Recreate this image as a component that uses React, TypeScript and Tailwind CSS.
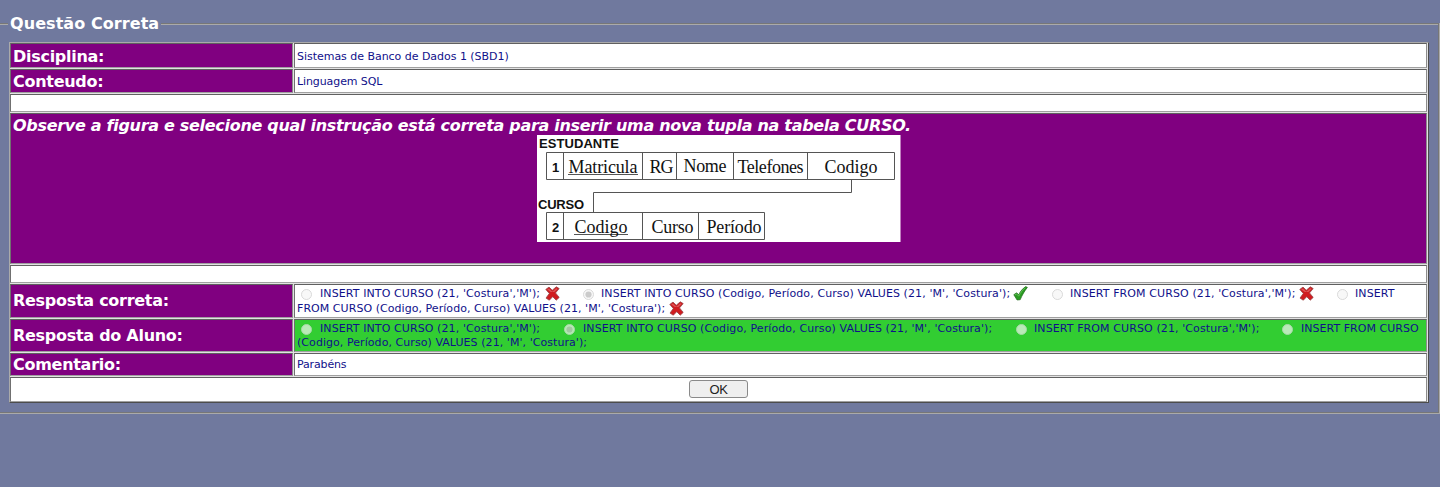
import type { ReactNode } from 'react';

const verdana = "font-['DejaVu_Sans',sans-serif]";

function Cross() {
  return (
    <svg width="15" height="15" viewBox="0 0 15 15" className="shrink-0">
      <path d="M.8 3.4 4 1.1 7.3 4.2 11.3 .8 14.2 2.6 10.5 6.9 14.2 11.4 11.2 14.2 7.7 10.7 4.3 14.2 1 12.1 4.3 7.5Z" fill="#d01c20" stroke="#96484a" strokeWidth=".8" strokeLinejoin="round" />
      <path d="M2.2 3.5 3.9 2.4 7.3 5.7 11.4 2.3 12.5 2.9 9.4 6 5.8 6Z" fill="#dd5658" />
    </svg>
  );
}

function Check() {
  return (
    <svg width="15" height="15" viewBox="0 0 15 15" className="shrink-0">
      <path d="M.8 8.7 3.7 6.8 5.7 8.8C7.4 5.2 9.8 2.4 12.7 .6L14.4 1.4C11.6 4.7 9.2 9 7.2 13.7L4.1 14Z" fill="#2a9c22" stroke="#246c20" strokeWidth=".7" strokeLinejoin="round" />
      <path d="M2 8.9 3.5 7.9 5.7 10.2C7.7 6.2 9.8 3.7 12.2 1.8" fill="none" stroke="#66c45a" strokeWidth=".9" />
    </svg>
  );
}

function Radio({ checked, green }: { checked?: boolean; green?: boolean }) {
  return (
    <svg width="11" height="11" viewBox="0 0 11 11" className="mt-[3px] shrink-0">
      <circle cx="5.5" cy="5.5" r="5" fill={green ? '#b9eab8' : '#f8f8f8'} stroke={green ? '#a5d8a4' : '#d9d9d9'} />
      {checked && <circle cx="5.5" cy="5.5" r="3.1" fill={green ? '#a1c8a1' : '#cbcbcb'} />}
    </svg>
  );
}

function Cell({ className, children }: { className: string; children?: ReactNode }) {
  return <div className={`flex border border-t-[#606060] border-l-[#707070] border-r-[#8c8c8c] border-b-[#a0a0a0] ${className}`}>{children}</div>;
}

function Row({ label, height, children, green, low }: { label: string; height: string; children: ReactNode; green?: boolean; low?: boolean }) {
  return (
    <div className={`flex gap-px ${height}`}>
      <Cell className="w-[283px] shrink-0 items-center bg-[#800080] pl-[2px] text-[16px] font-bold tracking-[-0.28px] text-white">
        <span className={low ? 'whitespace-nowrap pt-[2px] leading-5' : 'whitespace-nowrap leading-5'}>{label}</span>
      </Cell>
      <Cell className={green ? 'flex-1 items-center bg-[#32cd32] pl-[2px]' : 'flex-1 items-center bg-white pl-[2px]'}>{children}</Cell>
    </div>
  );
}

function Figure() {
  const serif = "'Liberation Serif', serif";
  const sans = "'Liberation Sans', sans-serif";
  return (
    <svg width="364" height="107" viewBox="0 0 364 107" className="mr-auto ml-[525.5px] block">
      <rect width="363.5" height="107" fill="#fff" />
      <g fill="none" stroke="#555" strokeWidth="1">
        <path d="M9.5 17.5H357.5V44.5H9.5ZM26.5 17.5V44.5M105.5 17.5V44.5M139.5 17.5V44.5M196.5 17.5V44.5M270.5 17.5V44.5" />
        <path d="M314.5 44.5V57.5H56.5V77.5" />
        <path d="M9.5 77.5H227.5V104.5H9.5ZM26.5 77.5V104.5M105.5 77.5V104.5M161.5 77.5V104.5" />
        <path d="M31 39.5H101M37 99.5H91" />
      </g>
      <g fontFamily={sans} fontWeight="700" fontSize="13" fill="#111">
        <text x="2" y="13" textLength="80">ESTUDANTE</text>
        <text x="1" y="73.5" textLength="46">CURSO</text>
        <text x="15" y="36.5">1</text>
        <text x="15" y="96.5">2</text>
      </g>
      <g fontFamily={serif} fontSize="18" fill="#111">
        <text x="31.5" y="37.5" textLength="69">Matricula</text>
        <text x="112.5" y="37.5" textLength="24">RG</text>
        <text x="146.5" y="36.5" textLength="43">Nome</text>
        <text x="200.5" y="37.5" textLength="66">Telefones</text>
        <text x="287.5" y="38" textLength="53">Codigo</text>
        <text x="37.5" y="97.5" textLength="53">Codigo</text>
        <text x="114.5" y="97.5" textLength="42">Curso</text>
        <text x="169.5" y="97.5" textLength="55">Período</text>
      </g>
    </svg>
  );
}

export default function App() {
  return (
    <main className={`h-[487px] w-[1440px] overflow-hidden bg-[#70799e] pt-[14px] ${verdana}`}>
      <section className="flex h-[400px] flex-col">
        <div className="flex h-5 items-center">
          <div className="h-[2px] w-2 border-t border-b border-t-[#777] border-b-[#aaa]" />
          <h1 className="w-[153px] whitespace-nowrap pl-[2px] text-[16px] leading-5 font-bold tracking-[0.07px] text-white">Questão Correta</h1>
          <div className="h-[2px] flex-1 border-t border-b border-t-[#777] border-b-[#aaa]" />
        </div>
        <div className="-mt-[11px] flex flex-1 border-b border-[#aaa]">
          <div className="flex-1 border-r border-b border-[#777] pt-[19px] pl-[9px]">
            <div className="flex h-[361px] w-[1420px] flex-col gap-px border border-t-[#aaa] border-r-[#4c4c4c] border-b-[#4c4c4c] border-l-[#aaa] bg-[#e2e2e2] pr-px text-[11px] text-[#10108a]">
              <Row label="Disciplina:" height="h-[25px]" low>
                <span className="pt-[3px] tracking-[-0.03px]">Sistemas de Banco de Dados 1 (SBD1)</span>
              </Row>
              <Row label="Conteudo:" height="h-[24px]" low>
                <span className="pt-[3px] tracking-[-0.1px]">Linguagem SQL</span>
              </Row>
              <Cell className="h-[18px] bg-white" />
              <Cell className="h-[151px] flex-col bg-[#800080]">
                <p className="h-[21px] whitespace-nowrap pl-[2px] text-[16px] leading-[23px] font-bold tracking-[-0.3px] text-white italic">
                  Observe a figura e selecione qual instrução está correta para inserir uma nova tupla na tabela CURSO.
                </p>
                <Figure />
              </Cell>
              <Cell className="h-[18px] bg-white" />
              <Row label="Resposta correta:" height="h-[34px]">
                <div className="flex flex-col whitespace-nowrap leading-[15px] tracking-[0.1px]">
                  <div className="flex h-[15px]">
                    <span className="flex w-[23px] pl-1"><Radio /></span>
                    <span className="w-[225px]">INSERT INTO CURSO (21, 'Costura','M');</span>
                    <span className="w-[38px]"><Cross /></span>
                    <span className="flex w-[18px]"><Radio checked /></span>
                    <span className="w-[412px]">INSERT INTO CURSO (Codigo, Período, Curso) VALUES (21, 'M', 'Costura');</span>
                    <span className="w-[39px]"><Check /></span>
                    <span className="flex w-[18px]"><Radio /></span>
                    <span className="w-[229px]">INSERT FROM CURSO (21, 'Costura','M');</span>
                    <span className="w-[38px]"><Cross /></span>
                    <span className="flex w-[18px]"><Radio /></span>
                    <span>INSERT</span>
                  </div>
                  <div className="flex h-[15px]">
                    <span className="w-[372px] tracking-[0.05px]">FROM CURSO (Codigo, Período, Curso) VALUES (21, 'M', 'Costura');</span>
                    <Cross />
                  </div>
                </div>
              </Row>
              <Row label="Resposta do Aluno:" height="h-[33px]" green>
                <div className="flex flex-col whitespace-nowrap leading-[14px] tracking-[0.1px]">
                  <div className="flex h-[14px]">
                    <span className="-mt-px flex w-[23px] pl-1"><Radio green /></span>
                    <span className="w-[244px]">INSERT INTO CURSO (21, 'Costura','M');</span>
                    <span className="-mt-px flex w-[19px]"><Radio green checked /></span>
                    <span className="w-[433px]">INSERT INTO CURSO (Codigo, Período, Curso) VALUES (21, 'M', 'Costura');</span>
                    <span className="-mt-px flex w-[18px]"><Radio green /></span>
                    <span className="w-[248px]">INSERT FROM CURSO (21, 'Costura','M');</span>
                    <span className="-mt-px flex w-[19px]"><Radio green /></span>
                    <span className="tracking-[0.04px]">INSERT FROM CURSO</span>
                  </div>
                  <span className="tracking-[0.06px]">(Codigo, Período, Curso) VALUES (21, 'M', 'Costura');</span>
                </div>
              </Row>
              <Row label="Comentario:" height="h-[23px]">
                <span className="pt-[2px] tracking-[-0.15px]">Parabéns</span>
              </Row>
              <Cell className="h-[25px] items-center justify-center bg-white">
                <button className="-mt-px h-[18px] w-[59px] rounded-[3px] border border-[#8a8a8a] bg-[#efefef] font-['Liberation_Sans',sans-serif] text-[13px] leading-[17px] tracking-[-0.5px] text-[#222]">OK</button>
              </Cell>
            </div>
          </div>
          <div className="w-px bg-[#aaa]" />
        </div>
      </section>
    </main>
  );
}
